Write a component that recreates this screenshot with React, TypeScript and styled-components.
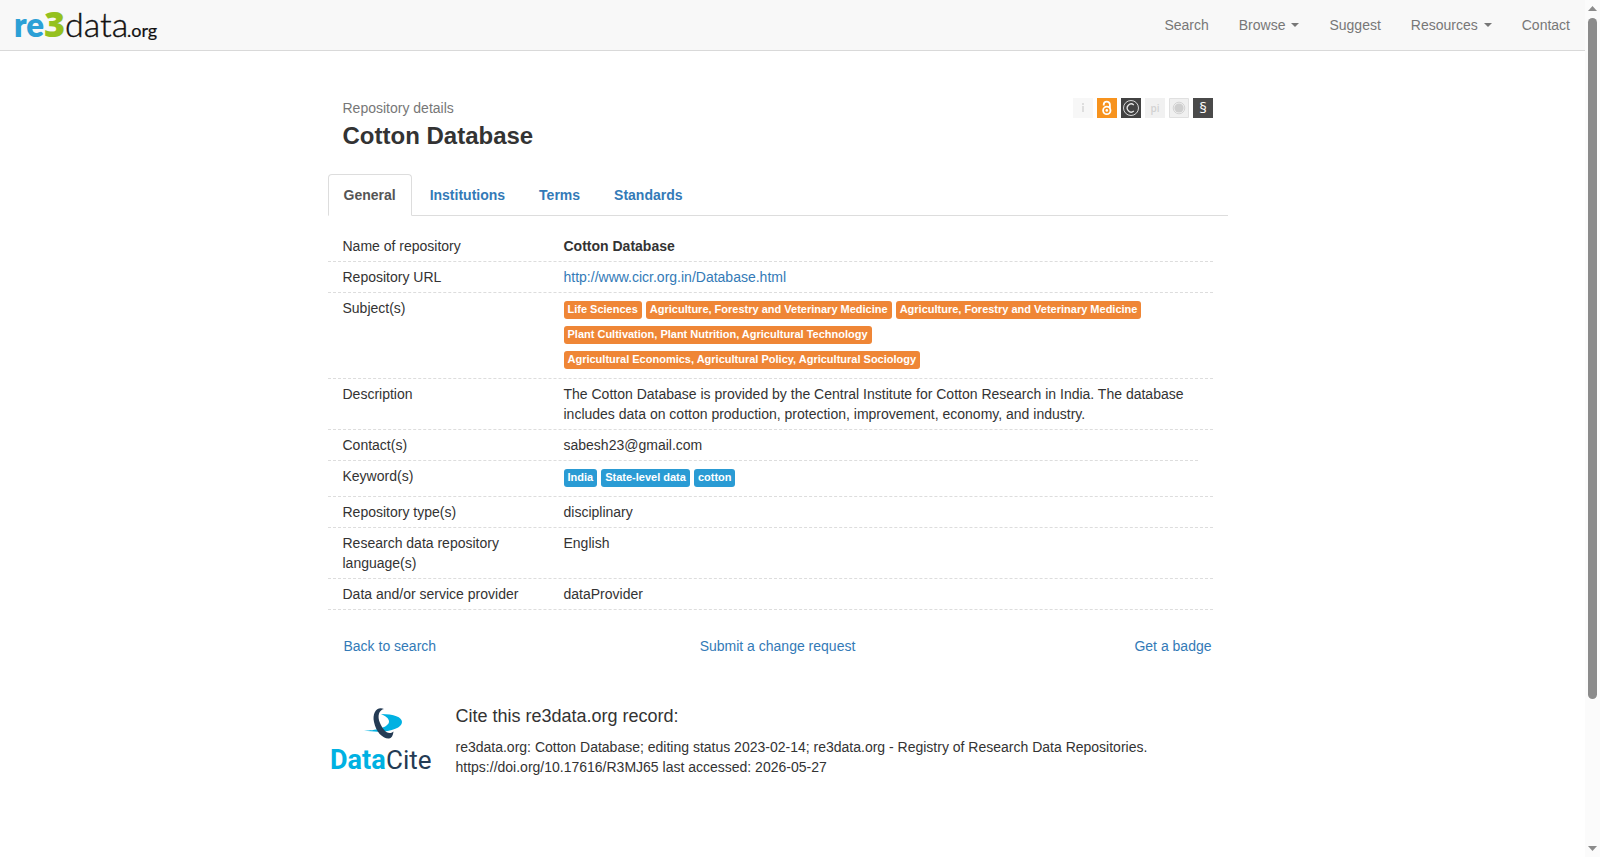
import React from "react";
import styled, { createGlobalStyle } from "styled-components";

const GlobalStyle = createGlobalStyle`
  *, *::before, *::after { box-sizing: border-box; }
  body {
    margin: 0;
    background: #fff;
    color: #333;
    font: 14px/20px "Liberation Sans", Arial, sans-serif;
  }
  a { color: #337ab7; text-decoration: none; }
  a:hover { text-decoration: underline; }
`;

const Shell = styled.div`
  display: flex;
  min-height: 100vh;
`;

const Page = styled.div`
  flex: 1;
  min-width: 0;
`;

const Navbar = styled.header`
  display: flex;
  justify-content: space-between;
  align-items: center;
  height: 51px;
  padding-left: 14px;
  background: #f8f8f8;
  border-bottom: 1px solid #d9d9d9;
`;

const Brand = styled.a`
  display: block;
  height: 50px;
`;

const NavLinks = styled.nav`
  display: flex;
`;

const NavLink = styled.a`
  display: flex;
  align-items: center;
  padding: 15px;
  color: #777;
`;

const Caret = styled.span`
  margin-left: 6px;
  border: 4px solid transparent;
  border-top-color: #777;
  border-bottom: 0;
`;

const Container = styled.main`
  max-width: 930px;
  margin: 0 auto;
  padding: 45px 30px 60px 0;
`;

const TitleBar = styled.div`
  display: flex;
  justify-content: space-between;
  align-items: flex-start;
  padding: 2px 15px 0;
`;

const Kicker = styled.div`
  color: #777;
`;

const Title = styled.h1`
  margin: 4px 0 0;
  font-size: 24px;
  line-height: 28px;
`;

const Badges = styled.div`
  display: flex;
  gap: 4px;
`;

const BadgeIcon = styled.svg`
  display: block;
  width: 20px;
  height: 20px;
`;

const Tabs = styled.nav`
  display: flex;
  gap: 2px;
  margin-top: 24px;
  border-bottom: 1px solid #ddd;
`;

const Tab = styled.a<{ $active?: boolean }>`
  margin-bottom: -1px;
  padding: 10px 15px;
  border: 1px solid ${(p) => (p.$active ? "#ddd" : "transparent")};
  border-bottom-color: ${(p) => (p.$active ? "#fff" : "transparent")};
  border-radius: 4px 4px 0 0;
  color: ${(p) => (p.$active ? "#555" : "#337ab7")};
  font-weight: bold;
`;

const Details = styled.dl`
  margin: 15px 15px 0 0;
`;

const Row = styled.div<{ $inset?: boolean }>`
  display: flex;
  margin-right: ${(p) => (p.$inset ? "15px" : "0")};
  border-bottom: 1px dashed #ddd;
`;

const Label = styled.dt`
  flex: 0 0 221px;
  padding: 5px 15px;
`;

const Value = styled.dd<{ $strong?: boolean }>`
  flex: 1;
  margin: 0;
  padding: 5px 15px;
  font-weight: ${(p) => (p.$strong ? "bold" : "normal")};
`;

const TagList = styled.dd`
  display: flex;
  flex: 1;
  flex-wrap: wrap;
  gap: 7px 4px;
  margin: 0;
  padding: 8px 15px 9px;
`;

const Tag = styled.span<{ $tone: string }>`
  padding: 0 4px 2px;
  border-radius: 3px;
  background: ${(p) => p.$tone};
  color: #fff;
  font-size: 11px;
  font-weight: bold;
  line-height: 16px;
`;

const Actions = styled.div`
  display: grid;
  grid-template-columns: 1fr 1fr 1fr;
  margin: 26px 15px 0 0;
  padding: 0 1px 0 16px;
`;

const Action = styled.a<{ $align: string }>`
  text-align: ${(p) => p.$align};
`;

const Citation = styled.section`
  display: flex;
  gap: 20px;
  margin-top: 48px;
`;

const CiteTitle = styled.h2`
  margin: 2px 0 11px;
  font-size: 18px;
  font-weight: normal;
  line-height: 20px;
`;

const CiteText = styled.p`
  margin: 0;
`;

const Scrollbar = styled.div`
  position: sticky;
  top: 0;
  display: flex;
  flex-direction: column;
  align-items: center;
  width: 15px;
  height: 100vh;
  padding: 6px 0;
  background: #fbfbfb;
`;

const Track = styled.div`
  flex: 1;
  width: 9px;
  margin: 7px 0;
`;

const Thumb = styled.div`
  height: 83%;
  border-radius: 5px;
  background: #8b8b8b;
`;

const Arrow = styled.svg`
  display: block;
  width: 9px;
  height: 5px;
  fill: #8b8b8b;
`;

const Logo = () => (
  <svg width="150" height="50" viewBox="0 0 150 50" role="img" aria-label="re3data.org">
    <text x="0" y="37" fontFamily="Lato, sans-serif" fontSize="33" fontWeight="800" fill="#2ca0d6">re</text>
    <text x="30" y="37" fontFamily="'Open Sans', sans-serif" fontSize="36" fontWeight="800" fill="#95c11f">3</text>
    <g fontFamily="Lato, sans-serif" fill="#111" stroke="#111">
      <text x="51" y="37" fontSize="34" fontWeight="300" strokeWidth="0.4">data</text>
      <text x="113" y="37" fontSize="18" fontWeight="400" strokeWidth="0.2">.org</text>
    </g>
  </svg>
);

const DataCiteLogo = () => (
  <svg width="108" height="76" viewBox="0 0 108 76" role="img" aria-label="DataCite">
    <path d="M53 10C66 10 74 13 74 18C74 25 58 30 36 26.500C48 27 61 23 61 17.500C61 14 57 12 53 10Z" fill="#00b1e2" />
    <path d="M56 5C49 2 44 9 46 18C48 28 55 35 61 34.500C64 34 65 31 65.500 27.500C60 32 55 26 52 19C49 12 51 6 56 5Z" fill="#243b54" />
    <g fontFamily="Roboto, sans-serif">
      <text x="2" y="65" fontSize="27" fontWeight="700" fill="#00b1e2">Data</text>
      <text x="58" y="65" fontSize="26" fontWeight="400" fill="#243b54">Cite</text>
    </g>
  </svg>
);

const StatusBadges = () => (
  <Badges>
    <BadgeIcon viewBox="0 0 20 20">
      <path d="M0 0h20v20H0z" fill="#f7f7f7" />
      <path d="M9 8h2v6H9zM9 5h2v2H9z" fill="#dedede" />
    </BadgeIcon>
    <BadgeIcon viewBox="0 0 20 20">
      <path d="M0 0h20v20H0z" fill="#f7931e" />
      <g fill="none" stroke="#fff" strokeWidth="1.8">
        <circle cx="9.8" cy="12.4" r="3.7" />
        <path d="M6.7 7.4V6.7a3.1 3.1 0 0 1 6.2 0v4" />
      </g>
      <circle cx="9.8" cy="12.4" r="1.3" fill="#fff" />
    </BadgeIcon>
    <BadgeIcon viewBox="0 0 20 20">
      <path d="M0 0h20v20H0z" fill="#424242" />
      <g fill="none" stroke="#e8e8e8">
        <circle cx="10" cy="10" r="7.5" strokeWidth="0.9" />
        <path d="M12.8 6.9a4 4 0 1 0 0 6.2" strokeWidth="1.3" />
      </g>
    </BadgeIcon>
    <BadgeIcon viewBox="0 0 20 20">
      <path d="M0 0h20v20H0z" fill="#f1f1f1" />
      <text x="10" y="14" textAnchor="middle" fontFamily="'Open Sans', sans-serif" fontSize="10" fontWeight="600" fill="#d2d2d2">pi</text>
    </BadgeIcon>
    <BadgeIcon viewBox="0 0 20 20">
      <path d="M.5.5h19v19H.5z" fill="#f0f0f0" stroke="#e0e0e0" />
      <circle cx="10" cy="10" r="5.8" fill="none" stroke="#d4d4d4" />
      <circle cx="10" cy="10" r="4.6" fill="#cfcfcf" />
    </BadgeIcon>
    <BadgeIcon viewBox="0 0 20 20">
      <path d="M0 0h20v20H0z" fill="#4a4a4a" />
      <text x="10" y="15" textAnchor="middle" fontFamily="'Open Sans', sans-serif" fontSize="15" fontWeight="400" fill="#fff">§</text>
    </BadgeIcon>
  </Badges>
);

const navItems = [
  { label: "Search" },
  { label: "Browse", menu: true },
  { label: "Suggest" },
  { label: "Resources", menu: true },
  { label: "Contact" },
];

const subjects = [
  "Life Sciences",
  "Agriculture, Forestry and Veterinary Medicine",
  "Agriculture, Forestry and Veterinary Medicine",
  "Plant Cultivation, Plant Nutrition, Agricultural Technology",
  "Agricultural Economics, Agricultural Policy, Agricultural Sociology",
];

const keywords = ["India", "State-level data", "cotton"];

export default function App() {
  return (
    <>
      <GlobalStyle />
      <Shell>
        <Page>
          <Navbar>
            <Brand href="#"><Logo /></Brand>
            <NavLinks>
              {navItems.map((item) => (
                <NavLink href="#" key={item.label}>
                  {item.label}
                  {item.menu && <Caret />}
                </NavLink>
              ))}
            </NavLinks>
          </Navbar>
          <Container>
            <TitleBar>
              <div>
                <Kicker>Repository details</Kicker>
                <Title>Cotton Database</Title>
              </div>
              <StatusBadges />
            </TitleBar>
            <Tabs>
              <Tab href="#" $active>General</Tab>
              <Tab href="#">Institutions</Tab>
              <Tab href="#">Terms</Tab>
              <Tab href="#">Standards</Tab>
            </Tabs>
            <Details>
              <Row>
                <Label>Name of repository</Label>
                <Value $strong>Cotton Database</Value>
              </Row>
              <Row>
                <Label>Repository URL</Label>
                <Value><a href="#">http://www.cicr.org.in/Database.html</a></Value>
              </Row>
              <Row>
                <Label>Subject(s)</Label>
                <TagList>
                  {subjects.map((s, i) => <Tag $tone="#ef8636" key={i}>{s}</Tag>)}
                </TagList>
              </Row>
              <Row>
                <Label>Description</Label>
                <Value>
                  The Cotton Database is provided by the Central Institute for Cotton Research in India. The
                  database includes data on cotton production, protection, improvement, economy, and industry.
                </Value>
              </Row>
              <Row $inset>
                <Label>Contact(s)</Label>
                <Value>sabesh23@gmail.com</Value>
              </Row>
              <Row>
                <Label>Keyword(s)</Label>
                <TagList>
                  {keywords.map((k) => <Tag $tone="#2a9bd4" key={k}>{k}</Tag>)}
                </TagList>
              </Row>
              <Row>
                <Label>Repository type(s)</Label>
                <Value>disciplinary</Value>
              </Row>
              <Row>
                <Label>Research data repository language(s)</Label>
                <Value>English</Value>
              </Row>
              <Row>
                <Label>Data and/or service provider</Label>
                <Value>dataProvider</Value>
              </Row>
            </Details>
            <Actions>
              <Action href="#" $align="left">Back to search</Action>
              <Action href="#" $align="center">Submit a change request</Action>
              <Action href="#" $align="right">Get a badge</Action>
            </Actions>
            <Citation>
              <DataCiteLogo />
              <div>
                <CiteTitle>Cite this re3data.org record:</CiteTitle>
                <CiteText>
                  re3data.org: Cotton Database; editing status 2023-02-14; re3data.org - Registry of Research Data
                  Repositories.
                  <br />
                  https://doi.org/10.17616/R3MJ65 last accessed: 2026-05-27
                </CiteText>
              </div>
            </Citation>
          </Container>
        </Page>
        <Scrollbar aria-hidden="true">
          <Arrow viewBox="0 0 9 5"><path d="M4.500 0L9 5H0z" /></Arrow>
          <Track><Thumb /></Track>
          <Arrow viewBox="0 0 9 5"><path d="M0 0h9L4.500 5z" /></Arrow>
        </Scrollbar>
      </Shell>
    </>
  );
}
